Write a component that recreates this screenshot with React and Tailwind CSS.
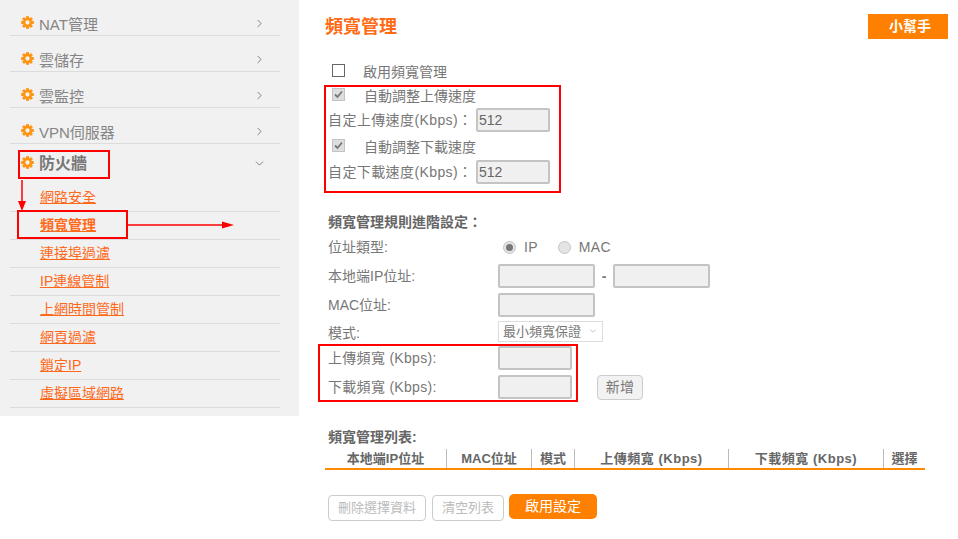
import React from "react";
import { ChevronRight, ChevronDown } from "lucide-react";

const font = { fontFamily: '"Liberation Sans","Noto Sans CJK TC",sans-serif' };

function Gear({ className }) {
  const teeth = [0, 45, 90, 135, 180, 225, 270, 315];
  return (
    <svg viewBox="0 0 14 14" className={className} width="13" height="13">
      {teeth.map((a) => (
        <rect key={a} x="5.4" y="0.2" width="3.2" height="3.4" fill="#ff9410" transform={`rotate(${a} 7 7)`} />
      ))}
      <circle cx="7" cy="7" r="3.6" fill="none" stroke="#ff9410" strokeWidth="2.6" />
    </svg>
  );
}

function MenuRow({ label }) {
  return (
    <div className="flex h-[36px] items-center border-b border-[#dcdcdc] pt-[14px] pr-[14px] pl-[11px]">
      <Gear className="mr-[5px] -mt-[4px] shrink-0" />
      <span className="flex-1 text-[15px] leading-none text-[#858585]">{label}</span>
      <ChevronRight size={13} strokeWidth={1.5} className="-mt-[3px] text-[#666]" />
    </div>
  );
}

function SubRow({ label, bold }) {
  return (
    <div className="flex h-[28px] items-center border-b border-[#dcdcdc] pl-[30px]">
      <a className={`-mt-[1px] text-[14px] leading-none text-[#ff6a1a] underline ${bold ? "font-bold" : ""}`}>{label}</a>
    </div>
  );
}

function Field({ w = "w-[97px]", value }) {
  return (
    <div className={`${w} h-[24px] shrink-0 rounded-[2px] border-2 border-[#c4c4c4] bg-[#f0f0f0] pl-[1px] text-[14px] leading-[20px] text-[#666]`}>
      {value}
    </div>
  );
}

function FormRow({ label, children, className = "" }) {
  return (
    <div className={`flex h-[24px] items-center ${className}`}>
      <span className="w-[173px] shrink-0 pl-[3px] text-[14px] text-[#777]">{label}</span>
      {children}
    </div>
  );
}

function Box({ checked, disabled }) {
  return (
    <span className={`-mt-[4px] flex h-[13px] w-[13px] shrink-0 items-center justify-center border ${disabled ? "border-[#c4c4c4] bg-[#dedede]" : "border-[#666] bg-white"}`}>
      {checked && (
        <svg width="9" height="9" viewBox="0 0 9 9">
          <path d="M1 4.5L3.5 7L8 1.5" fill="none" stroke="#777" strokeWidth="1.8" />
        </svg>
      )}
    </span>
  );
}

function Check({ label, checked, disabled, labelPad = "ml-[18px]" }) {
  return (
    <div className="flex h-[24px] items-center pl-[7px]">
      <Box checked={checked} disabled={disabled} />
      <span className={`${labelPad} text-[14px] text-[#777]`}>{label}</span>
    </div>
  );
}

function Radio({ checked, className = "" }) {
  return (
    <span className={`flex h-[13px] w-[13px] shrink-0 items-center justify-center rounded-full border border-[#c4c4c4] bg-[#e4e4e4] ${className}`}>
      {checked && <span className="h-[7px] w-[7px] rounded-full bg-[#777]" />}
    </span>
  );
}

function Th({ w, children, last, className = "" }) {
  return (
    <div className={`flex h-[19px] items-center justify-center text-[13px] font-bold text-[#666] ${last ? "" : "border-r border-[#bbb]"} ${w} ${className}`}>
      {children}
    </div>
  );
}

export default function App() {
  return (
    <div className="flex h-[539px] w-[958px] overflow-hidden bg-white" style={font}>
      {/* sidebar */}
      <aside className="h-[416px] w-[299px] shrink-0 bg-[#f1f1f1] pr-[19px] pl-[10px]">
        <MenuRow label="NAT管理" />
        <MenuRow label="雲儲存" />
        <MenuRow label="雲監控" />
        <MenuRow label="VPN伺服器" />
        <div className="flex h-[40px] items-center pr-[14px] pl-[11px]">
          <Gear className="mr-[5px] -mt-[4px] shrink-0" />
          <span className="flex-1 text-[16px] font-bold leading-none text-[#777]">防火牆</span>
          <ChevronDown size={13} strokeWidth={1.5} className="-mt-[2px] text-[#666]" />
        </div>
        <SubRow label="網路安全" />
        <SubRow label="頻寬管理" bold />
        <SubRow label="連接埠過濾" />
        <SubRow label="IP連線管制" />
        <SubRow label="上網時間管制" />
        <SubRow label="網頁過濾" />
        <SubRow label="鎖定IP" />
        <SubRow label="虛擬區域網路" />
      </aside>

      {/* main */}
      <main className="w-[649px] pt-[14px] pl-[26px]">
        <div className="flex h-[25px] items-center justify-between">
          <h1 className="text-[18px] font-bold leading-none text-[#ff6a13]">頻寬管理</h1>
          <button className="h-[25px] w-[80px] bg-[#ff7f00] pl-[4px] text-[14px] font-bold text-white">小幫手</button>
        </div>

        <div className="mt-[21px]">
          <Check label="啟用頻寬管理" />
          <Check label="自動調整上傳速度" checked disabled labelPad="ml-[19px]" />
          <div className="flex h-[24px] items-center">
            <span className="w-[151px] shrink-0 whitespace-nowrap pl-[3px] text-[14px] tracking-[0.4px] text-[#777]">自定上傳速度(Kbps)：</span>
            <Field w="w-[74px]" value="512" />
          </div>
          <div className="mt-[3px]">
            <Check label="自動調整下載速度" checked disabled labelPad="ml-[19px]" />
          </div>
          <div className="mt-[1px] flex h-[24px] items-center">
            <span className="w-[151px] shrink-0 whitespace-nowrap pl-[3px] text-[14px] tracking-[0.4px] text-[#777]">自定下載速度(Kbps)：</span>
            <Field w="w-[74px]" value="512" />
          </div>
        </div>

        <div className="mt-[26px] flex h-[24px] items-center pl-[3px] text-[14px] font-bold text-[#666]">頻寬管理規則進階設定：</div>

        <FormRow label="位址類型:" className="mt-[1px]">
          <Radio checked className="ml-[5px]" />
          <span className="ml-[8px] text-[14px] tracking-[0.3px] text-[#777]">IP</span>
          <Radio className="ml-[20px]" />
          <span className="ml-[8px] text-[14px] tracking-[0.3px] text-[#777]">MAC</span>
        </FormRow>
        <FormRow label="本地端IP位址:" className="mt-[5px]">
          <Field />
          <span className="w-[18px] text-center text-[14px] font-bold text-[#777]">-</span>
          <Field />
        </FormRow>
        <FormRow label="MAC位址:" className="mt-[5px]">
          <Field />
        </FormRow>
        <FormRow label="模式:" className="mt-[4px]">
          <div className="relative -mt-[3px] h-[21px] w-[105px] border border-[#ddd] bg-white pl-[4px] text-[13px] leading-[20px] text-[#777]">
            最小頻寬保證
            <ChevronDown size={10} strokeWidth={2} className="absolute top-[4px] right-[4px] text-[#bbb]" />
          </div>
        </FormRow>
        <FormRow label="上傳頻寬 (Kbps):" className="mt-[1px] tracking-[0.3px]">
          <Field w="w-[74px]" />
        </FormRow>
        <FormRow label="下載頻寬 (Kbps):" className="mt-[5px] tracking-[0.3px]">
          <Field w="w-[74px]" />
          <button className="ml-[25px] h-[25px] w-[46px] rounded-[4px] border border-[#ccc] bg-[#f2f2f2] text-[14px] text-[#777]">新增</button>
        </FormRow>

        <div className="mt-[27px] flex h-[23px] items-center pl-[3px] text-[14px] font-bold text-[#666]">頻寬管理列表:</div>
        <div className="flex w-[600px] border-b-2 border-[#ff8a00]">
          <Th w="w-[122px]">本地端IP位址</Th>
          <Th w="w-[85px]">MAC位址</Th>
          <Th w="w-[43px]">模式</Th>
          <Th w="w-[154px]" className="tracking-[0.5px]">上傳頻寬 (Kbps)</Th>
          <Th w="w-[155px]" className="tracking-[0.5px]">下載頻寬 (Kbps)</Th>
          <Th w="w-[41px]" last>選擇</Th>
        </div>

        <div className="mt-[25px] flex items-start pl-[3px]">
          <button className="h-[26px] w-[98px] rounded-[4px] border border-[#ccc] bg-white text-[13px] text-[#bbb]">刪除選擇資料</button>
          <button className="ml-[6px] h-[26px] w-[72px] rounded-[4px] border border-[#ccc] bg-white text-[13px] text-[#bbb]">清空列表</button>
          <button className="ml-[5px] -mt-[1px] h-[25px] w-[88px] rounded-[5px] bg-[#ff7f00] text-[14px] text-white">啟用設定</button>
        </div>
      </main>

      {/* annotations */}
      <div className="absolute top-[150px] left-[18px] h-[29px] w-[92px] border-2 border-[#f00]" />
      <div className="absolute top-[210px] left-[17px] h-[29px] w-[111px] border-2 border-[#f00]" />
      <div className="absolute top-[85px] left-[324px] h-[108px] w-[237px] border-2 border-[#f00]" />
      <div className="absolute top-[344px] left-[318px] h-[58px] w-[260px] border-2 border-[#f00]" />
      <svg className="absolute top-[178px] left-[15px]" width="16" height="34" viewBox="0 0 16 34">
        <path d="M7 2V24" stroke="#f00" strokeWidth="1.5" />
        <path d="M3 23H11L7 33Z" fill="#f00" />
      </svg>
      <svg className="absolute top-[218px] left-[127px]" width="108" height="14" viewBox="0 0 108 14">
        <path d="M1 7H96" stroke="#f00" strokeWidth="1.5" />
        <path d="M95 3.5L107 7L95 10.5Z" fill="#f00" />
      </svg>
    </div>
  );
}
